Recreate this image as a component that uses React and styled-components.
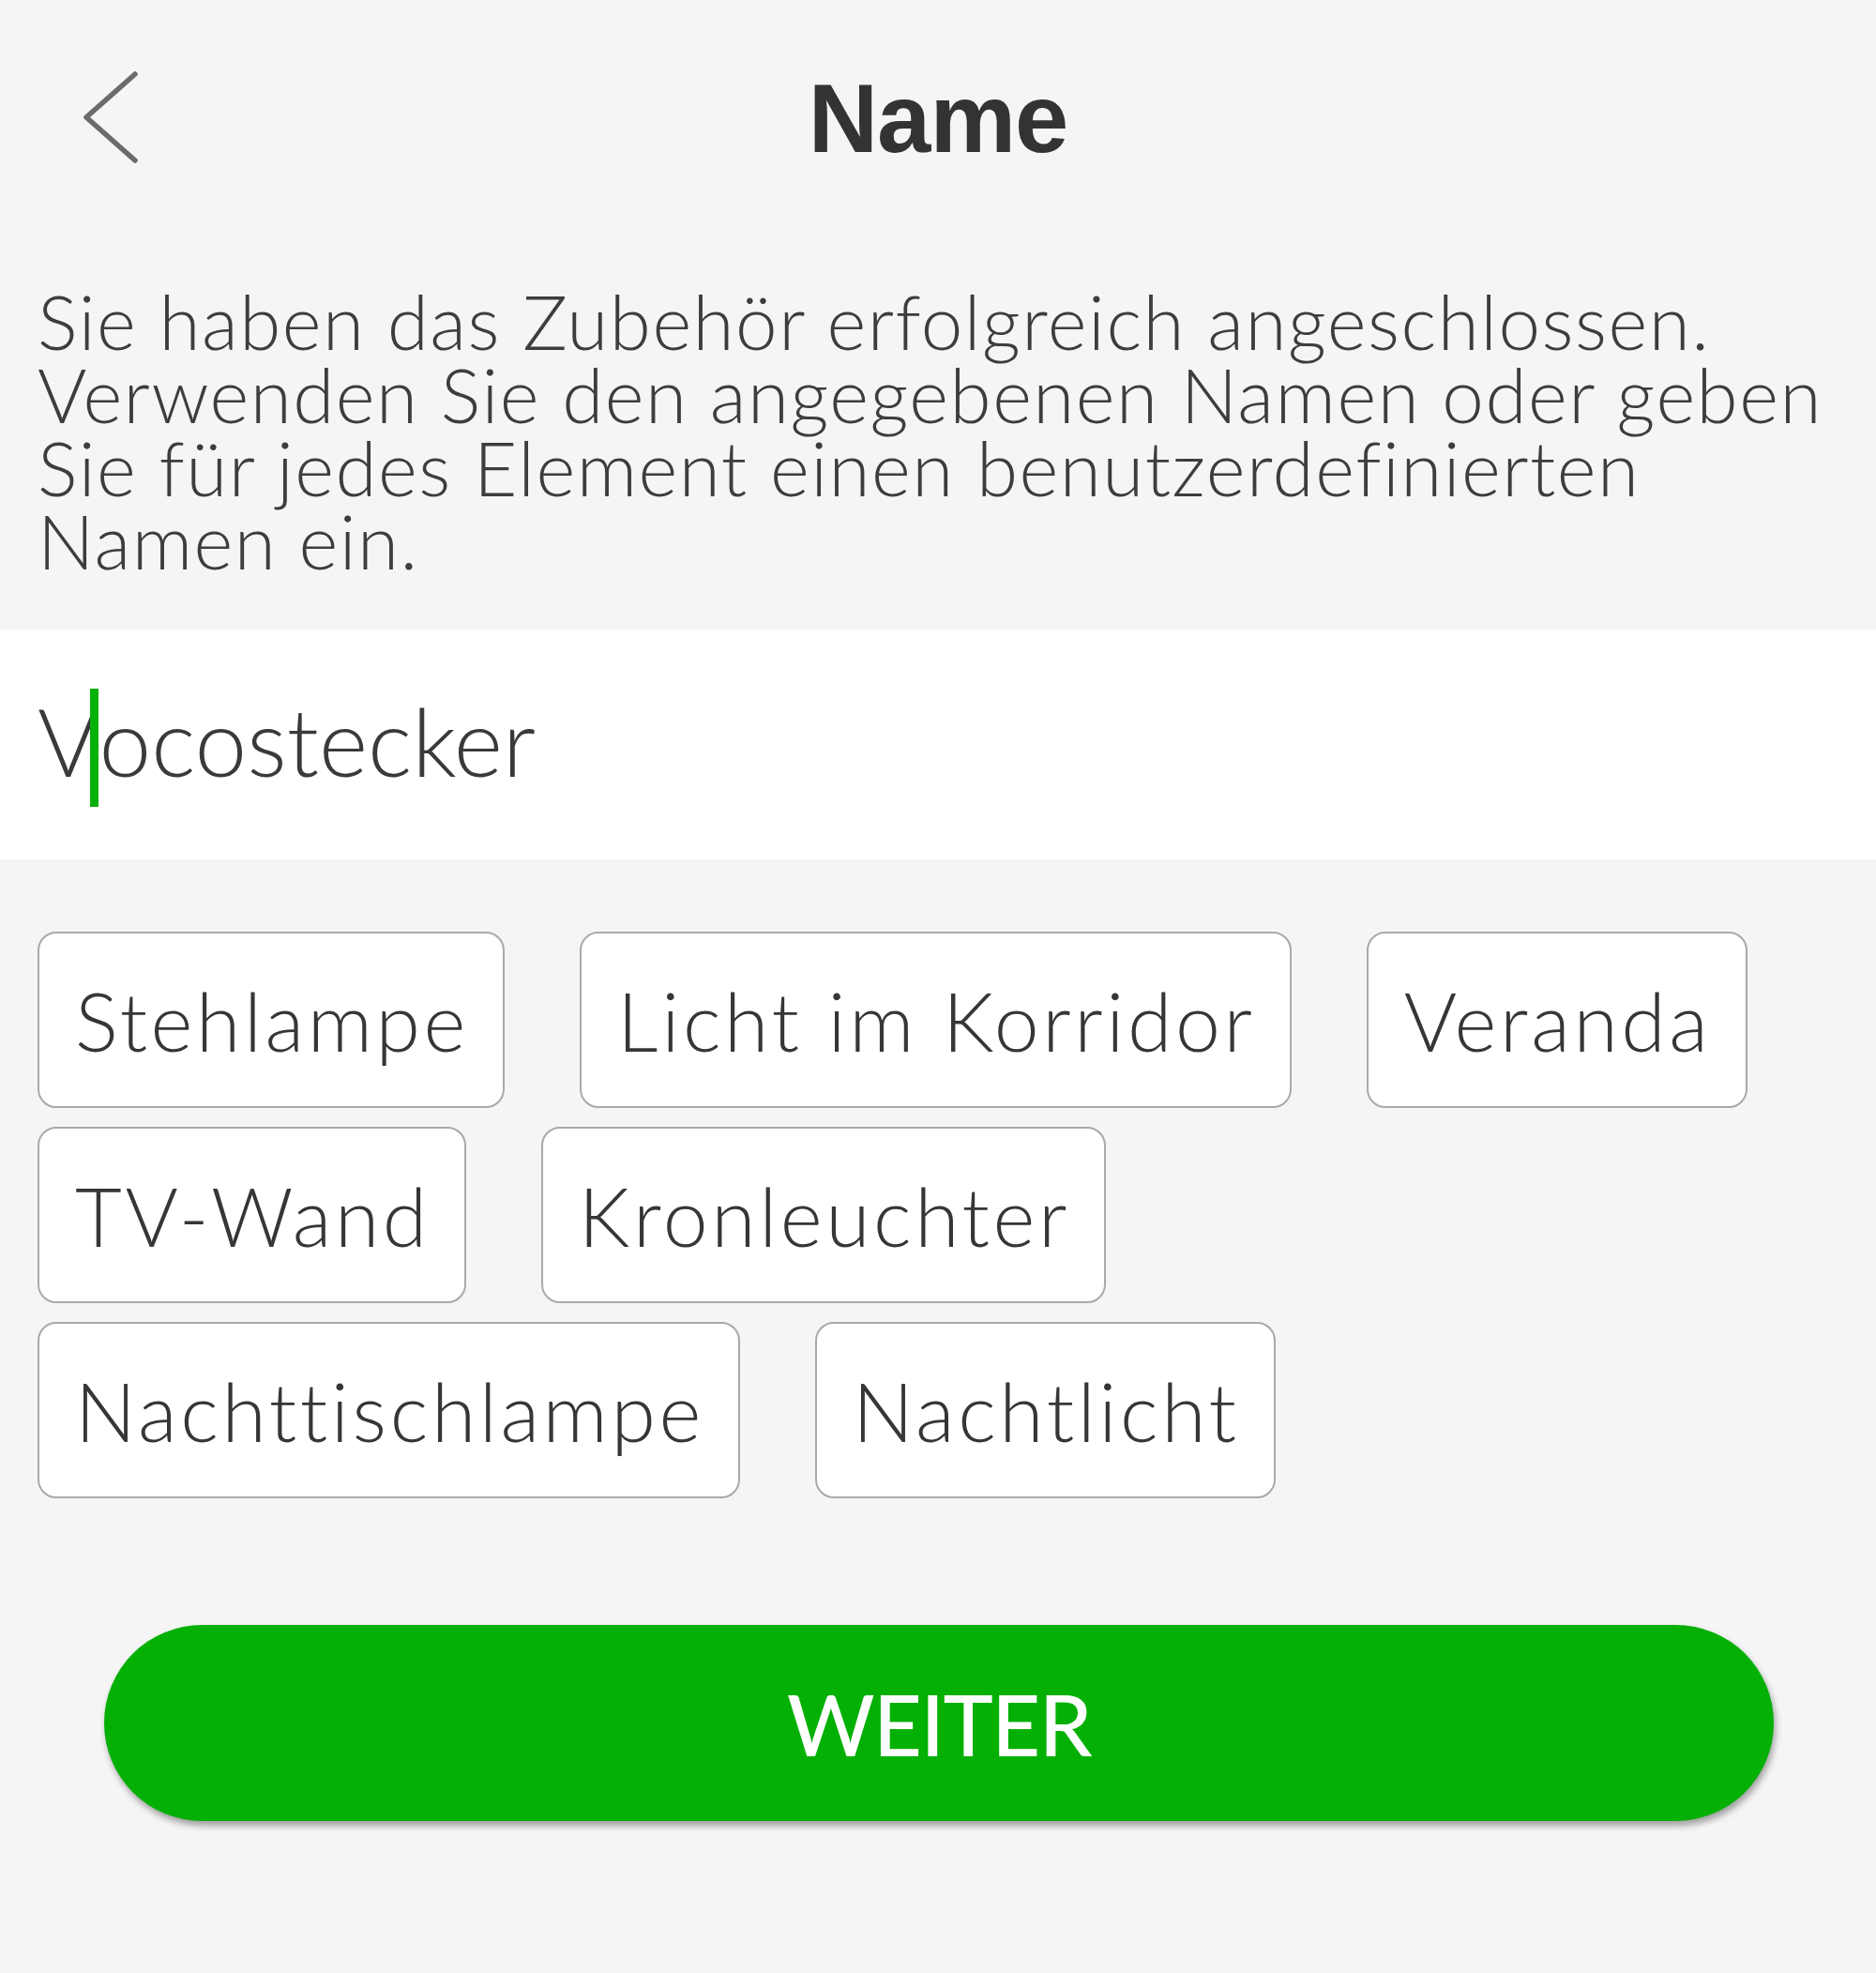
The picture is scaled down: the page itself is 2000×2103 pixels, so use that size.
import React from 'react';
import styled, { createGlobalStyle } from 'styled-components';

const GlobalStyle = createGlobalStyle`
  body {
    margin: 0;
    background: #f5f5f5;
    font-family: Lato, "Noto Sans", sans-serif;
    color: #3b3b3b;
  }
`;

const UI = {
  Page: styled.div`
    width: 2000px;
    min-height: 2103px;
    background: #f5f5f5;
  `,
  Header: styled.header`
    height: 252px;
    display: grid;
    grid-template-columns: 1fr auto 1fr;
    align-items: center;
  `,
  Back: styled.button`
    justify-self: start;
    margin-left: 86px;
    padding: 0;
    border: 0;
    background: none;
    display: flex;
    cursor: pointer;
  `,
  Title: styled.h1`
    margin: 0;
    font-family: "Liberation Sans", Arial, sans-serif;
    font-weight: 700;
    font-size: 103px;
    line-height: 1;
    color: #333;
    letter-spacing: -1px;
  `,
  Intro: styled.p`
    margin: 51px 0 56px;
    padding: 0 40px;
    font-size: 80px;
    line-height: 78px;
    font-weight: 300;
    letter-spacing: 1.5px;
    color: #3d3d3d;
  `,
  NameField: styled.div`
    background: #fff;
    height: 245px;
    box-sizing: border-box;
    padding: 63px 40px 0;
    font-size: 100px;
    line-height: 100px;
    font-weight: 300;
    color: #3a3a3a;
    white-space: nowrap;
  `,
  Caret: styled.span`
    display: inline-block;
    width: 9px;
    height: 126px;
    margin: 0 1px 0 -10px;
    vertical-align: -32px;
    background: #08b00a;
  `,
  Suggestions: styled.div`
    margin-top: 77px;
    padding: 0 40px;
    display: flex;
    flex-direction: column;
    gap: 20px;
  `,
  Row: styled.div`
    display: flex;
    gap: 80px;
  `,
  Chip: styled.button`
    height: 188px;
    box-sizing: border-box;
    padding: 0 36px 0 38px;
    display: flex;
    align-items: center;
    background: #fff;
    border: 2px solid #a9a9a9;
    border-radius: 20px;
    font-family: inherit;
    font-size: 86px;
    font-weight: 300;
    letter-spacing: 3.6px;
    color: #363636;
    white-space: nowrap;
    cursor: pointer;
  `,
  Actions: styled.div`
    margin-top: 135px;
    padding: 0 109px 0 111px;
  `,
  Next: styled.button`
    width: 100%;
    height: 209px;
    border: 0;
    border-radius: 105px;
    background: #05b005;
    box-shadow: 2px 5px 7px rgba(0, 0, 0, 0.35);
    color: #fff;
    font-family: inherit;
    font-size: 90px;
    font-weight: 500;
    letter-spacing: -1.5px;
    cursor: pointer;
  `
};

const rows = [
  ['Stehlampe', 'Licht im Korridor', 'Veranda'],
  ['TV-Wand', 'Kronleuchter'],
  ['Nachttischlampe', 'Nachtlicht'],
];

const App = () => (
  <UI.Page>
    <GlobalStyle />
    <UI.Header>
      <UI.Back aria-label="Zurück">
        <svg width="62" height="100" viewBox="0 0 62 100">
          <polyline points="58,3 6,49 58,95" fill="none" stroke="#6b6b6b" strokeWidth="5.5" strokeLinecap="round" strokeLinejoin="round" />
        </svg>
      </UI.Back>
      <UI.Title>Name</UI.Title>
      <div />
    </UI.Header>

    <UI.Intro>
      Sie haben das Zubehör erfolgreich angeschlossen. Verwenden Sie den angegebenen Namen oder geben Sie für jedes Element einen benutzerdefinierten Namen ein.
    </UI.Intro>

    <UI.NameField>
      V<UI.Caret />ocostecker
    </UI.NameField>

    <UI.Suggestions>
      {rows.map((row, i) => (
        <UI.Row key={i}>
          {row.map(name => <UI.Chip key={name}>{name}</UI.Chip>)}
        </UI.Row>
      ))}
    </UI.Suggestions>

    <UI.Actions>
      <UI.Next>WEITER</UI.Next>
    </UI.Actions>
  </UI.Page>
);

export default App;
